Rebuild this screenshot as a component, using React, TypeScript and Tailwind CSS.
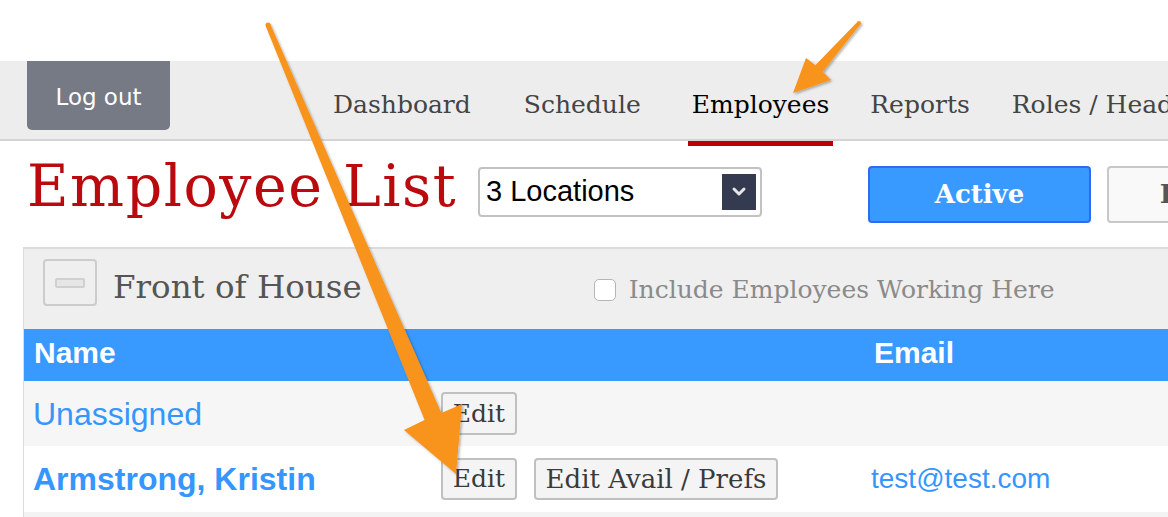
import React from "react";

const slab = { fontFamily: '"DejaVu Serif", serif' };
const sans = { fontFamily: '"Liberation Sans", Arial, sans-serif' };
const verdana = { fontFamily: '"DejaVu Sans", Verdana, sans-serif' };

function Chevron() {
  return (
    <svg width="16" height="12" viewBox="0 0 16 12">
      <path d="M3 3 L8 8 L13 3" fill="none" stroke="#e6e6e6" strokeWidth="3" strokeLinecap="round" strokeLinejoin="round" />
    </svg>
  );
}

function Arrows() {
  return (
    <svg className="absolute inset-0 pointer-events-none" width="1168" height="517" viewBox="0 0 1168 517">
      <defs>
        <filter id="sh" x="-20%" y="-20%" width="140%" height="140%">
          <feDropShadow dx="1.5" dy="1.5" stdDeviation="1.2" floodColor="#000" floodOpacity="0.3" />
        </filter>
      </defs>
      <g fill="#f8931d" filter="url(#sh)">
        <polygon points="265.7,26 424.6,420 404,430 456,474 462,404 441.4,413 270.3,24" />
        <circle cx="268" cy="25" r="2.5" />
        <polygon points="857.5,21.7 815.3,65.2 806,58 793,93 831,80 822.8,71.8 860.5,24.3" />
        <circle cx="859" cy="23" r="2" />
      </g>
    </svg>
  );
}

export default function App() {
  const navItems = [
    { label: "Dashboard", ml: "ml-[159px]" },
    { label: "Schedule", ml: "ml-[45px]" },
    { label: "Employees", ml: "ml-[43px]", active: true },
    { label: "Reports", ml: "ml-[33px]" },
    { label: "Roles / Headcount", ml: "ml-[34px]" },
  ];
  return (
    <div className="relative w-[1168px] h-[517px] overflow-hidden bg-white">
      <div className="h-[61px] bg-white" />
      {/* Nav */}
      <div className="flex h-[80px] bg-[#ededed] border-b-2 border-[#d4d4d4] whitespace-nowrap">
        <div
          className="ml-[27px] w-[143px] h-[69px] shrink-0 rounded-b-[5px] bg-[#757a84] text-white text-[23px] flex items-center justify-center pt-[3px]"
          style={verdana}
        >
          Log out
        </div>
        {navItems.map((it) => (
          <div key={it.label} className={`${it.ml} relative shrink-0 flex items-center pt-[10px] px-[4px]`}>
            <span
              className={`text-[25px] ${it.active ? "text-black" : "text-[#444]"}`}
              style={slab}
            >
              {it.label}
            </span>
            {it.active && <div className="absolute left-0 right-0 -bottom-[7px] h-[5px] bg-[#bb0000]" />}
          </div>
        ))}
      </div>
      {/* Title row */}
      <div className="flex items-start h-[106px] pt-[26px] whitespace-nowrap">
        <div className="w-[478px] shrink-0 pl-[27px] -mt-[9px]">
          <span className="text-[57px] leading-none tracking-[1.5px] text-[#bb0a0e]" style={slab}>
            Employee List
          </span>
        </div>
        <div className="w-[284px] h-[50px] shrink-0 border-2 border-[#c2c2c2] rounded-[4px] flex items-center justify-between pl-[6px] pr-[4px] bg-white">
          <span className="text-[29px] text-black" style={sans}>3 Locations</span>
          <div className="w-[34px] h-[36px] bg-[#343a4f] flex items-center justify-center">
            <Chevron />
          </div>
        </div>
        <div
          className="ml-[106px] -mt-[1px] w-[223px] h-[57px] shrink-0 rounded-[4px] border-2 border-[#2f6bf0] bg-[#3899ff] text-white font-bold text-[26px] flex items-center justify-center"
          style={slab}
        >
          Active
        </div>
        <div
          className="ml-[16px] -mt-[1px] w-[223px] h-[57px] shrink-0 rounded-[4px] border-2 border-[#c8c8c8] bg-[#f9f9f9] text-[#555] font-bold text-[26px] flex items-center justify-center"
          style={slab}
        >
          Inactive
        </div>
      </div>
      {/* Panel */}
      <div className="ml-[23px] border-l border-t-2 border-[#dcdcdc] bg-[#f3f3f3] h-[300px]">
        <div className="h-[80px] bg-[#efefef] flex items-start whitespace-nowrap">
          <div className="ml-[19px] mt-[10px] w-[54px] h-[47px] shrink-0 rounded-[4px] border-2 border-[#cccccc] flex items-center justify-center">
            <div className="w-[30px] h-[10px] rounded-[2px] border-2 border-[#d0d0d0] bg-[#e6e6e6]" />
          </div>
          <div className="ml-[16px] mt-[14px] text-[32.5px] text-[#555]" style={slab}>
            Front of House
          </div>
          <div className="ml-[232px] mt-[22px] flex items-center">
            <div className="w-[22px] h-[22px] rounded-[5px] border border-[#b5b5b5] bg-white" />
            <span className="ml-[13px] text-[25px] text-[#8a8a8a]" style={slab}>
              Include Employees Working Here
            </span>
          </div>
        </div>
        {/* table header */}
        <div className="grid grid-cols-[417px_430px_1fr] h-[52px] bg-[#3899ff] items-center text-white font-bold text-[30px] pb-[5px]" style={sans}>
          <div className="pl-[10px]">Name</div>
          <div />
          <div className="pl-[3px]">Email</div>
        </div>
        {/* row 1 */}
        <div className="grid grid-cols-[417px_430px_1fr] h-[65px] bg-[#f6f6f6] items-center">
          <div className="pl-[9px] text-[32px] text-[#3596ff]" style={sans}>Unassigned</div>
          <div className="flex">
            <div className="w-[76px] h-[43px] rounded-[4px] border-2 border-[#c0c0c0] bg-[#f4f4f4] text-[#3a3a3a] text-[25px] flex items-center justify-center" style={slab}>
              Edit
            </div>
          </div>
          <div />
        </div>
        {/* row 2 */}
        <div className="grid grid-cols-[417px_430px_1fr] h-[66px] bg-white items-center whitespace-nowrap">
          <div className="pl-[9px] text-[32px] font-bold text-[#3596ff]" style={sans}>Armstrong, Kristin</div>
          <div className="flex gap-[17px]">
            <div className="w-[76px] h-[42px] rounded-[4px] border-2 border-[#c0c0c0] bg-[#f4f4f4] text-[#3a3a3a] text-[25px] flex items-center justify-center" style={slab}>
              Edit
            </div>
            <div className="w-[244px] h-[42px] rounded-[4px] border-2 border-[#c0c0c0] bg-[#f4f4f4] text-[#3a3a3a] text-[26px] flex items-center justify-center" style={slab}>
              Edit Avail / Prefs
            </div>
          </div>
          <div className="text-[28px] text-[#3596ff]" style={sans}>test@test.com</div>
        </div>
      </div>
      <Arrows />
    </div>
  );
}
